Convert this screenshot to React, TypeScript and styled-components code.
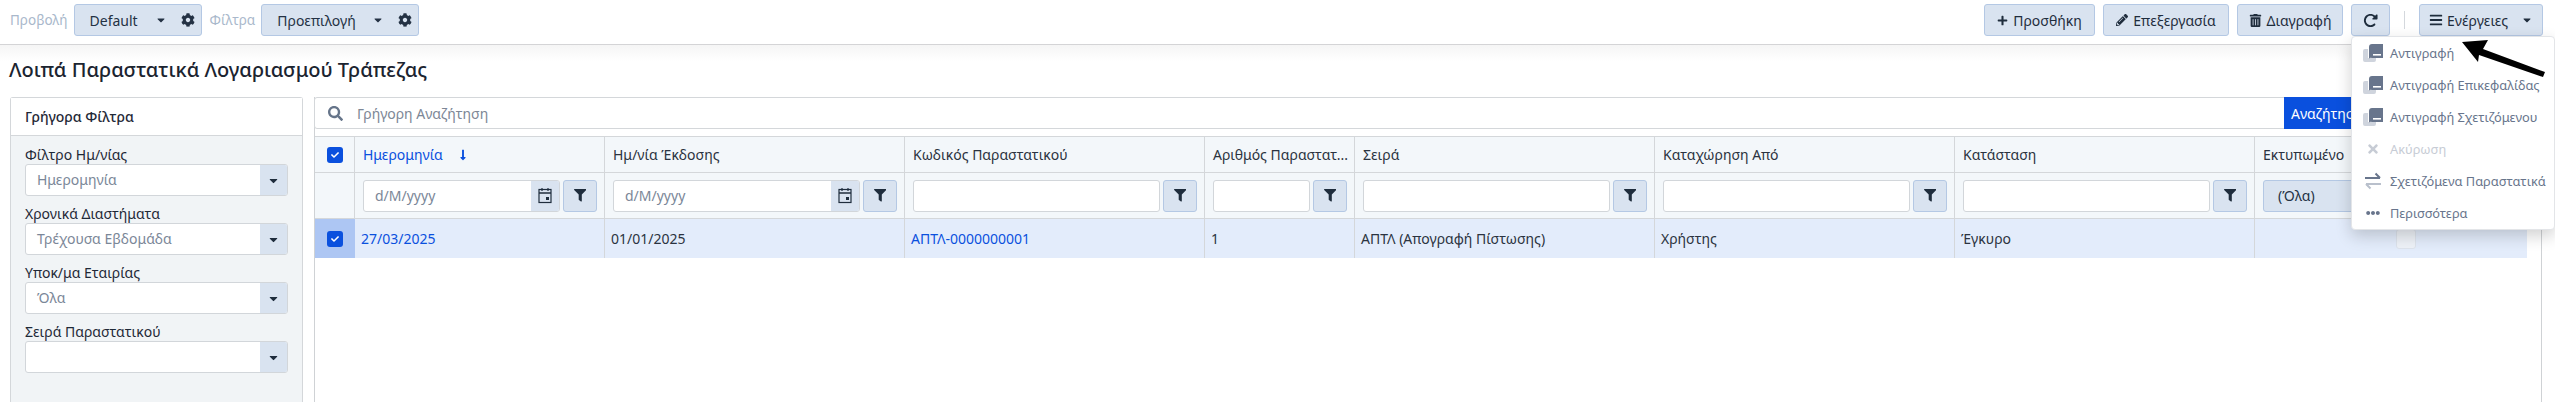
import React from 'react';
import styled, { createGlobalStyle } from 'styled-components';
import {
  FaCog,
  FaPlus,
  FaPencilAlt,
  FaTrashAlt,
  FaBars,
  FaCaretDown,
  FaSearch,
  FaFilter,
  FaCheck,
  FaTimes,
  FaEllipsisH,
  FaLongArrowAltDown,
} from 'react-icons/fa';
import { FaRotateRight } from 'react-icons/fa6';

const GlobalStyle = createGlobalStyle`
  html, body {
    margin: 0;
    padding: 0;
    background: #fff;
    overflow: hidden;
  }
  body {
    font-family: "Noto Sans", "Open Sans", sans-serif;
    font-size: 14px;
    color: #1f2937;
  }
`;

const Page = styled.div`
  position: relative;
  width: 2555px;
  height: 402px;
  overflow: hidden;
`;

const TopBar = styled.div`
  display: flex;
  justify-content: space-between;
  align-items: center;
  box-sizing: border-box;
  height: 45px;
  padding: 4px 12px 8px 10px;
  border-bottom: 1px solid #d4d4d6;
`;

const BarGroup = styled.div`
  display: flex;
  align-items: center;
`;

const ViewLabel = styled.span`
  color: #a9b8cb;
  font-size: 13.5px;
  margin-right: 6px;
`;

const Picker = styled.div<{ $width: number }>`
  display: flex;
  align-items: center;
  box-sizing: border-box;
  width: ${(p) => p.$width}px;
  height: 32px;
  padding: 0 6px 0 15px;
  margin-right: 8px;
  background: #d9e3f0;
  border: 1px solid #b4c8e4;
  border-radius: 3px;
  font-size: 14px;
  color: #243244;
`;

const PickerText = styled.span`
  flex: 1;
`;

const PickerCaret = styled(FaCaretDown)`
  margin-right: 14px;
`;

const BarButton = styled.button<{ $width: number; $gap?: number; $flush?: boolean }>`
  display: flex;
  align-items: center;
  justify-content: center;
  gap: ${(p) => p.$gap ?? 5}px;
  box-sizing: border-box;
  width: ${(p) => p.$width}px;
  height: 32px;
  margin-left: ${(p) => (p.$flush ? 0 : 8)}px;
  padding: 0;
  background: #d9e3f0;
  border: 1px solid #b4c8e4;
  border-radius: 3px;
  font-family: inherit;
  font-size: 14px;
  color: #1f2d3d;
`;

const ActionsCaret = styled(FaCaretDown)`
  margin-left: 9px;
`;

const BarDivider = styled.div`
  width: 1px;
  height: 18px;
  margin: 0 14px 0 14px;
  background: #d4d8dd;
`;

const TitleArea = styled.div`
  height: 52px;
  box-sizing: border-box;
  padding: 8px 0 0 9px;
  background: linear-gradient(#f5f5f5, #fff 16px);
`;

const PageTitle = styled.h1`
  margin: 0;
  font-size: 20px;
  line-height: 34px;
  font-weight: 500;
  color: #1b2430;
`;

const Content = styled.div`
  display: flex;
  gap: 11px;
  padding-left: 10px;
  width: 2542px;
  box-sizing: border-box;
`;

const SidePanel = styled.aside`
  box-sizing: border-box;
  width: 293px;
  height: 305px;
  background: #f1f4f6;
  border: 1px solid #d4d7da;
  border-bottom: none;
  border-radius: 3px 3px 0 0;
`;

const SideHeader = styled.div`
  height: 38px;
  box-sizing: border-box;
  padding-left: 14px;
  line-height: 38px;
  background: #fff;
  border-bottom: 1px solid #d4d7da;
  font-size: 14px;
  font-weight: 500;
  color: #1f2937;
`;

const SideBody = styled.div`
  display: flex;
  flex-direction: column;
  gap: 9px;
  padding: 10px 14px 0;
`;

const Field = styled.div`
  display: flex;
  flex-direction: column;
`;

const FieldLabel = styled.label`
  font-size: 14px;
  line-height: 18px;
  color: #1f2937;
`;

const SelectBox = styled.div`
  display: flex;
  box-sizing: border-box;
  height: 32px;
  background: #fff;
  border: 1px solid #d2d6da;
  border-radius: 3px;
  overflow: hidden;
`;

const SelectText = styled.span`
  flex: 1;
  padding-left: 11px;
  line-height: 30px;
  font-size: 14px;
  color: #7b8798;
`;

const SelectArrow = styled.span`
  display: flex;
  align-items: center;
  justify-content: center;
  width: 27px;
  background: #d9e3f0;
  color: #1f2d3d;
  font-size: 13px;
`;

const MainPanel = styled.section`
  flex: 1;
  height: 305px;
  box-sizing: border-box;
  border-right: 1px solid #cfd2d5;
  border-left: 1px solid #cfd2d5;
  display: flex;
  flex-direction: column;
`;

const SearchBar = styled.div`
  display: flex;
  align-items: center;
  box-sizing: border-box;
  height: 32px;
  margin-left: -1px;
  margin-right: -1px;
  padding-left: 13px;
  background: #fff;
  border: 1px solid #d4d7da;
  border-radius: 3px;
`;

const SearchIcon = styled.span`
  display: flex;
  color: #66758a;
  font-size: 15px;
  margin-right: 14px;
`;

const SearchInput = styled.span`
  flex: 1;
  font-size: 14px;
  color: #7d8796;
`;

const SearchButton = styled.button`
  align-self: stretch;
  width: 258px;
  margin: -1px -1px -1px 0;
  padding: 0 0 0 7px;
  text-align: left;
  background: #0a50de;
  border: none;
  color: #fff;
  font-family: inherit;
  font-size: 14px;
`;

const Table = styled.div`
  display: grid;
  grid-template-columns: 40px 250px 300px 300px 150px 300px 300px 300px 272px;
  margin-top: 7px;
  border-top: 1px solid #d4d7da;
`;

const HeaderCell = styled.div<{ $active?: boolean }>`
  display: flex;
  align-items: center;
  gap: 14px;
  box-sizing: border-box;
  height: 36px;
  padding: 0 8px;
  background: #f3f7fa;
  border-right: 1px solid #d4d7da;
  border-bottom: 1px solid #d4d7da;
  font-size: 14px;
  color: ${(p) => (p.$active ? '#0a50de' : '#2b3340')};
  white-space: nowrap;
  overflow: hidden;
`;

const CheckCell = styled(HeaderCell)`
  justify-content: center;
  padding: 0;
`;

const FilterCell = styled.div`
  display: flex;
  align-items: center;
  gap: 3px;
  box-sizing: border-box;
  height: 46px;
  padding: 0 7px 0 8px;
  background: #f3f7fa;
  border-right: 1px solid #d4d7da;
  border-bottom: 1px solid #d4d7da;
`;

const FilterInput = styled.div`
  display: flex;
  flex: 1;
  box-sizing: border-box;
  height: 32px;
  background: #fff;
  border: 1px solid #d2d6da;
  border-radius: 3px;
  overflow: hidden;
`;

const DateText = styled.span`
  flex: 1;
  padding-left: 11px;
  line-height: 30px;
  font-size: 14px;
  color: #7b8798;
`;

const CalendarAddon = styled.span`
  display: flex;
  align-items: center;
  justify-content: center;
  width: 28px;
  background: #d9e3f0;
`;

const FilterButton = styled.span`
  display: flex;
  align-items: center;
  justify-content: center;
  flex-shrink: 0;
  box-sizing: border-box;
  width: 34px;
  height: 32px;
  background: #d9e3f0;
  border: 1px solid #b4c8e4;
  border-radius: 3px;
  color: #1f2d3d;
  font-size: 12.5px;
`;

const AllSelect = styled.div`
  flex: 1;
  box-sizing: border-box;
  height: 32px;
  padding-left: 14px;
  line-height: 30px;
  background: #d9e3f0;
  border: 1px solid #b4c8e4;
  border-radius: 3px;
  font-size: 14px;
  color: #243244;
`;

const RowCell = styled.div<{ $link?: boolean }>`
  box-sizing: border-box;
  height: 39px;
  padding: 0 6px;
  line-height: 39px;
  background: #e3ecfb;
  border-right: 1px solid #d4d7da;
  font-size: 14px;
  color: ${(p) => (p.$link ? '#0a50de' : '#2b3340')};
  white-space: nowrap;
`;

const LastRowCell = styled(RowCell)`
  display: flex;
  align-items: center;
  padding-left: 141px;
  border-right: none;
`;

const PrintedBox = styled.span`
  box-sizing: border-box;
  width: 20px;
  height: 20px;
  background: #eef2f8;
  border: 1px solid #dde3ec;
  border-radius: 3px;
`;

const RowCheckCell = styled.div`
  display: flex;
  align-items: center;
  justify-content: center;
  height: 39px;
  background: #adc6f3;
`;

const Checkbox = styled.span`
  display: flex;
  align-items: center;
  justify-content: center;
  width: 16px;
  height: 16px;
  background: #0a50de;
  border-radius: 3px;
  color: #fff;
  font-size: 8px;
`;

const Menu = styled.div`
  position: absolute;
  top: 36px;
  left: 2351px;
  width: 204px;
  height: 194px;
  box-sizing: border-box;
  background: #fff;
  border: 1px solid #e3e5e8;
  border-radius: 4px;
  box-shadow: 0 6px 16px rgba(0, 0, 0, 0.18);
`;

const MenuItem = styled.div<{ $disabled?: boolean }>`
  display: flex;
  align-items: center;
  height: 32px;
  padding-left: 11px;
  font-size: 12.8px;
  color: ${(p) => (p.$disabled ? '#c7ccd5' : '#68758c')};
  white-space: nowrap;
`;

const MenuIcon = styled.span`
  display: flex;
  align-items: center;
  justify-content: center;
  width: 20px;
  margin-right: 7px;
  font-size: 14px;
`;

const ArrowMark = styled.svg`
  position: absolute;
  top: 36px;
  left: 2455px;
`;

const CopyIcon = () => (
  <svg width="20" height="18" viewBox="0 0 20 18">
    <path d="M0 7a2 2 0 0 1 2-2h3v9h8v2a2 2 0 0 1-2 2H2a2 2 0 0 1-2-2z" fill="#cfd4dd" />
    <path d="M6 3a3 3 0 0 1 3-3h11v14H9a3 3 0 0 0-3 .5z" fill="#68758c" />
    <rect x="10" y="10" width="8" height="1.6" fill="#fff" />
  </svg>
);

const CalendarIcon = () => (
  <svg width="14" height="17" viewBox="0 0 14 17" fill="none" stroke="#1f2d3d">
    <rect x="1" y="2.5" width="12" height="13" strokeWidth="1.2" />
    <path d="M1 6h12" strokeWidth="1.5" />
    <path d="M4 1v3M10 1v3" strokeWidth="1.2" />
    <rect x="8" y="10" width="3" height="3" fill="#1f2d3d" stroke="none" />
  </svg>
);

const SwapIcon = () => (
  <svg width="18" height="18" viewBox="0 0 18 18" fill="none" strokeWidth="2">
    <path d="M1 6h15M11.5 1.5L16 6" stroke="#68758c" />
    <path d="M17 12H2M6.5 16.5L2 12" stroke="#b9c0cc" />
  </svg>
);

const columns = ['Ημ/νία Έκδοσης', 'Κωδικός Παραστατικού', 'Αριθμός Παραστατ...', 'Σειρά', 'Καταχώρηση Από', 'Κατάσταση', 'Εκτυπωμένο'];

const sideFields = [
  { label: 'Φίλτρο Ημ/νίας', value: 'Ημερομηνία' },
  { label: 'Χρονικά Διαστήματα', value: 'Τρέχουσα Εβδομάδα' },
  { label: 'Υποκ/μα Εταιρίας', value: 'Όλα' },
  { label: 'Σειρά Παραστατικού', value: '' },
];

function App() {
  return (
    <Page>
      <GlobalStyle />
      <TopBar>
        <BarGroup>
          <ViewLabel>Προβολή</ViewLabel>
          <Picker $width={128}>
            <PickerText>Default</PickerText>
            <PickerCaret size={12} />
            <FaCog size={14} />
          </Picker>
          <ViewLabel>Φίλτρα</ViewLabel>
          <Picker $width={158}>
            <PickerText>Προεπιλογή</PickerText>
            <PickerCaret size={12} />
            <FaCog size={14} />
          </Picker>
        </BarGroup>
        <BarGroup>
          <BarButton $width={111}>
            <FaPlus size={11} />
            Προσθήκη
          </BarButton>
          <BarButton $width={126}>
            <FaPencilAlt size={12} />
            Επεξεργασία
          </BarButton>
          <BarButton $width={106}>
            <FaTrashAlt size={13} />
            Διαγραφή
          </BarButton>
          <BarButton $width={39}>
            <FaRotateRight size={15} />
          </BarButton>
          <BarDivider />
          <BarButton $width={124} $gap={4} $flush>
            <FaBars size={14} />
            Ενέργειες
            <ActionsCaret size={12} />
          </BarButton>
        </BarGroup>
      </TopBar>
      <TitleArea>
        <PageTitle>Λοιπά Παραστατικά Λογαριασμού Τράπεζας</PageTitle>
      </TitleArea>
      <Content>
        <SidePanel>
          <SideHeader>Γρήγορα Φίλτρα</SideHeader>
          <SideBody>
            {sideFields.map((field) => (
              <Field key={field.label}>
                <FieldLabel>{field.label}</FieldLabel>
                <SelectBox>
                  <SelectText>{field.value}</SelectText>
                  <SelectArrow>
                    <FaCaretDown />
                  </SelectArrow>
                </SelectBox>
              </Field>
            ))}
          </SideBody>
        </SidePanel>
        <MainPanel>
          <SearchBar>
            <SearchIcon>
              <FaSearch />
            </SearchIcon>
            <SearchInput>Γρήγορη Αναζήτηση</SearchInput>
            <SearchButton>Αναζήτηση</SearchButton>
          </SearchBar>
          <Table>
            <CheckCell>
              <Checkbox>
                <FaCheck />
              </Checkbox>
            </CheckCell>
            <HeaderCell $active>
              Ημερομηνία
              <FaLongArrowAltDown size={12} />
            </HeaderCell>
            {columns.map((name) => (
              <HeaderCell key={name}>{name}</HeaderCell>
            ))}

            <FilterCell />
            {[0, 1].map((i) => (
              <FilterCell key={i}>
                <FilterInput>
                  <DateText>d/M/yyyy</DateText>
                  <CalendarAddon>
                    <CalendarIcon />
                  </CalendarAddon>
                </FilterInput>
                <FilterButton>
                  <FaFilter />
                </FilterButton>
              </FilterCell>
            ))}
            {[0, 1, 2, 3, 4].map((i) => (
              <FilterCell key={i}>
                <FilterInput />
                <FilterButton>
                  <FaFilter />
                </FilterButton>
              </FilterCell>
            ))}
            <FilterCell>
              <AllSelect>(Όλα)</AllSelect>
            </FilterCell>

            <RowCheckCell>
              <Checkbox>
                <FaCheck />
              </Checkbox>
            </RowCheckCell>
            <RowCell $link>27/03/2025</RowCell>
            <RowCell>01/01/2025</RowCell>
            <RowCell $link>ΑΠΤΛ-0000000001</RowCell>
            <RowCell>1</RowCell>
            <RowCell>ΑΠΤΛ (Απογραφή Πίστωσης)</RowCell>
            <RowCell>Χρήστης</RowCell>
            <RowCell>Έγκυρο</RowCell>
            <LastRowCell>
              <PrintedBox />
            </LastRowCell>
          </Table>
        </MainPanel>
      </Content>
      <Menu>
        <MenuItem>
          <MenuIcon>
            <CopyIcon />
          </MenuIcon>
          Αντιγραφή
        </MenuItem>
        <MenuItem>
          <MenuIcon>
            <CopyIcon />
          </MenuIcon>
          Αντιγραφή Επικεφαλίδας
        </MenuItem>
        <MenuItem>
          <MenuIcon>
            <CopyIcon />
          </MenuIcon>
          Αντιγραφή Σχετιζόμενου
        </MenuItem>
        <MenuItem $disabled>
          <MenuIcon>
            <FaTimes />
          </MenuIcon>
          Ακύρωση
        </MenuItem>
        <MenuItem>
          <MenuIcon>
            <SwapIcon />
          </MenuIcon>
          Σχετιζόμενα Παραστατικά
        </MenuItem>
        <MenuItem>
          <MenuIcon>
            <FaEllipsisH />
          </MenuIcon>
          Περισσότερα
        </MenuItem>
      </Menu>
      <ArrowMark width="95" height="45" viewBox="0 0 95 45">
        <path d="M7 6L33 4 28 13 90 36 88 41 24 19 23 26z" fill="#000" />
      </ArrowMark>
    </Page>
  );
}

export default App;
